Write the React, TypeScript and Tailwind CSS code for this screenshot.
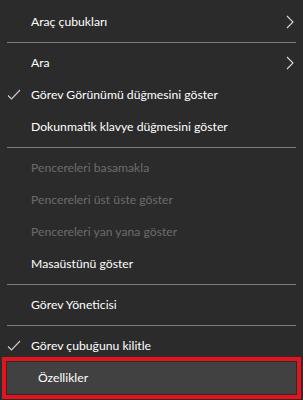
import React from 'react';

type Item = { label: string; check?: boolean; sub?: boolean; disabled?: boolean; selected?: boolean } | 'sep';

const items: Item[] = [
  { label: 'Araç çubukları', sub: true },
  'sep',
  { label: 'Ara', sub: true },
  { label: 'Görev Görünümü düğmesini göster', check: true },
  { label: 'Dokunmatik klavye düğmesini göster' },
  'sep',
  { label: 'Pencereleri basamakla', disabled: true },
  { label: 'Pencereleri üst üste göster', disabled: true },
  { label: 'Pencereleri yan yana göster', disabled: true },
  { label: 'Masaüstünü göster' },
  'sep',
  { label: 'Görev Yöneticisi' },
  'sep',
  { label: 'Görev çubuğunu kilitle', check: true },
  { label: 'Özellikler', selected: true },
];

function Check() {
  return (
    <svg width="14" height="12" viewBox="0 0 14 12" className="absolute left-[7px] top-[10px]">
      <path d="M1 6.5 L4.5 10 L13 1" fill="none" stroke="#cfcfcf" strokeWidth="1.1" />
    </svg>
  );
}

function Chevron() {
  return (
    <svg width="8" height="14" viewBox="0 0 8 14" className="absolute right-[9px] top-[9px]">
      <path d="M1 1 L7 7 L1 13" fill="none" stroke="#d8d8d8" strokeWidth="1.1" />
    </svg>
  );
}

export default function App() {
  return (
    <div
      className="w-[303px] h-[400px] bg-[#2b2b2b] pt-[6px] overflow-hidden"
      style={{ fontFamily: 'Lato, "Noto Sans", sans-serif' }}
    >
      {items.map((it, i) =>
        it === 'sep' ? (
          <div key={i} className="h-[9px] flex items-center px-[7px]">
            <div className="h-px w-full bg-[#7d7d7d]" />
          </div>
        ) : (
          <div
            key={i}
            className={
              'relative h-[32px] flex items-center pl-[31px] text-[12.2px] ' +
              (it.disabled ? 'text-[#6b6b6b] ' : 'text-white ') +
              (it.selected
                ? 'mx-[7px] pl-[24px] bg-[#414141] outline-4 outline-[#e5131d] outline-offset-[1px]'
                : '')
            }
          >
            {it.check && <Check />}
            <span>{it.label}</span>
            {it.sub && <Chevron />}
          </div>
        )
      )}
    </div>
  );
}
